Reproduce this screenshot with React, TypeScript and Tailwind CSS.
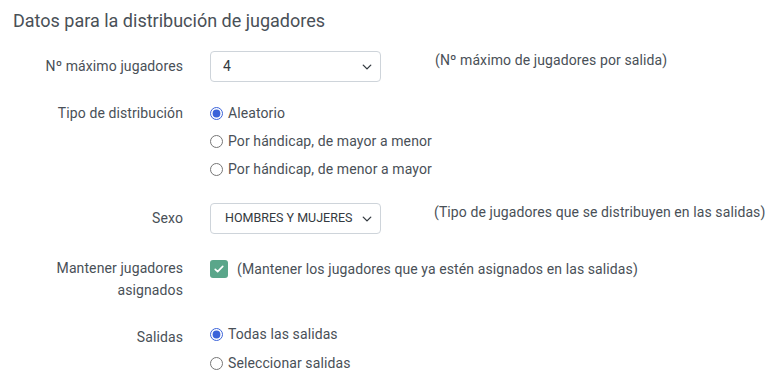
import React, { useState } from 'react';

function Chevron() {
    return (
        <svg width="10" height="10" viewBox="0 0 16 16" className="absolute right-[9px] top-1/2 -translate-y-1/2 pointer-events-none">
            <path d="M2 5l6 6 6-6" fill="none" stroke="#343a40" strokeWidth="2.2" strokeLinecap="round" strokeLinejoin="round" />
        </svg>
    );
}

function Radio({ checked, label, onClick }: { checked: boolean; label: string; onClick: () => void }) {
    return (
        <label className="flex items-center gap-[5px] h-[20px] cursor-pointer" onClick={onClick}>
            <input type="radio" readOnly checked={checked} className="m-0 w-[13px] h-[13px] accent-[#3b63d9]" />
            <span>{label}</span>
        </label>
    );
}

export default function App() {
    const [tipo, setTipo] = useState('aleatorio');
    const [salidas, setSalidas] = useState('todas');
    const [mantener, setMantener] = useState(true);

    return (
        <div className="w-[780px] h-[389px] bg-white text-[#495057] text-[14px] tracking-[0.1px] overflow-hidden" style={{ fontFamily: 'Roboto, sans-serif' }}>
            <h2 className="text-[18px] leading-[22px] tracking-normal pt-[10px] pl-[13px]">Datos para la distribución de jugadores</h2>

            {/* Nº máximo */}
            <div className="flex items-center mt-[19px]">
                <div className="w-[183px] text-right">Nº máximo jugadores</div>
                <div className="relative ml-[27px] w-[171px]">
                    <select defaultValue="4" className="w-full h-[31px] appearance-none border border-[#ced4da] rounded-[4px] pl-[12px] text-[14px] text-[#343a40] bg-white">
                        <option>1</option>
                        <option>2</option>
                        <option>3</option>
                        <option>4</option>
                    </select>
                    <Chevron />
                </div>
                <div className="ml-[54px] -mt-[12px]">(Nº máximo de jugadores por salida)</div>
            </div>

            {/* Tipo de distribución */}
            <div className="flex mt-[21px]">
                <div className="w-[183px] text-right leading-[20px]">Tipo de distribución</div>
                <div className="ml-[27px] flex flex-col gap-[8px]">
                    <Radio checked={tipo === 'aleatorio'} label="Aleatorio" onClick={() => setTipo('aleatorio')} />
                    <Radio checked={tipo === 'mayor'} label="Por hándicap, de mayor a menor" onClick={() => setTipo('mayor')} />
                    <Radio checked={tipo === 'menor'} label="Por hándicap, de menor a mayor" onClick={() => setTipo('menor')} />
                </div>
            </div>

            {/* Sexo */}
            <div className="flex items-center mt-[24px]">
                <div className="w-[183px] text-right">Sexo</div>
                <div className="relative ml-[27px] w-[171px]">
                    <select defaultValue="HM" className="w-full h-[31px] appearance-none border border-[#ced4da] rounded-[4px] pl-[14px] text-[12.5px] tracking-normal text-[#343a40] bg-white">
                        <option value="HM">HOMBRES Y MUJERES</option>
                        <option value="H">HOMBRES</option>
                        <option value="M">MUJERES</option>
                    </select>
                    <Chevron />
                </div>
                <div className="ml-[53px] -mt-[12px]">(Tipo de jugadores que se distribuyen en las salidas)</div>
            </div>

            {/* Mantener */}
            <div className="flex mt-[23px]">
                <div className="w-[183px] text-right leading-[22px]">Mantener jugadores<br />asignados</div>
                <div className="ml-[27px] flex items-start gap-[9px]">
                    <button
                        onClick={() => setMantener(!mantener)}
                        className={`w-[18px] h-[18px] rounded-[3px] flex items-center justify-center mt-[3px] ${mantener ? 'bg-[#5aa68a]' : 'bg-white border border-[#ced4da]'}`}
                    >
                        {mantener && (
                            <svg width="12" height="12" viewBox="0 0 16 16">
                                <path d="M3 8.5l3.2 3L13 4.5" fill="none" stroke="#fff" strokeWidth="2.2" strokeLinecap="round" strokeLinejoin="round" />
                            </svg>
                        )}
                    </button>
                    <span className="leading-[22px] pt-[1px]">(Mantener los jugadores que ya estén asignados en las salidas)</span>
                </div>
            </div>

            {/* Salidas */}
            <div className="flex mt-[23px]">
                <div className="w-[183px] text-right leading-[20px] mt-[3px]">Salidas</div>
                <div className="ml-[27px] flex flex-col gap-[9px]">
                    <Radio checked={salidas === 'todas'} label="Todas las salidas" onClick={() => setSalidas('todas')} />
                    <Radio checked={salidas === 'sel'} label="Seleccionar salidas" onClick={() => setSalidas('sel')} />
                </div>
            </div>
        </div>
    );
}
